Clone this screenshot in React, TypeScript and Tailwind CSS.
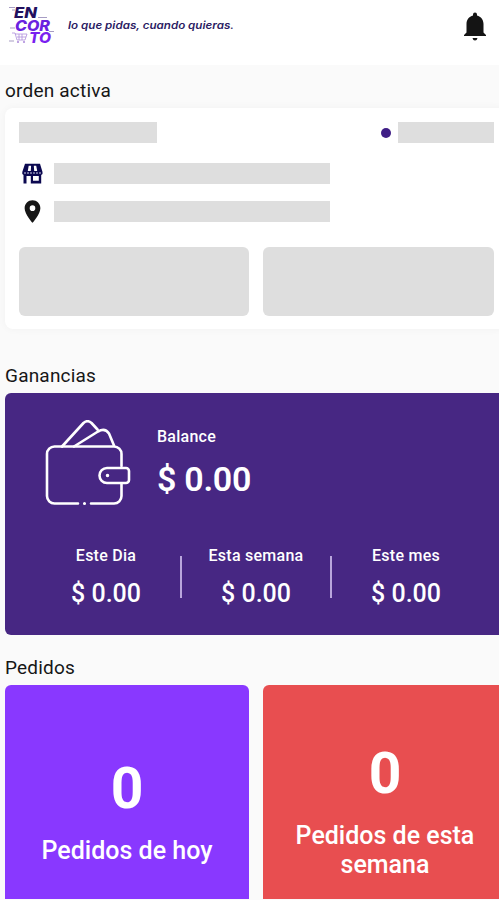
import React from 'react';
import { MdLocationOn } from 'react-icons/md';

const earnings = [
  { label: 'Este Dia', amount: '$ 0.00' },
  { label: 'Esta semana', amount: '$ 0.00' },
  { label: 'Este mes', amount: '$ 0.00' },
];

function Logo() {
  return (
    <svg width="52" height="44" viewBox="5 3 52 44" fontFamily="Inter, sans-serif" fontWeight="800" fontStyle="italic">
      <path d="M9 7.500h6M12 10h3M38 17.500h9M10 28h5M9 41h5M49 31.500h5" stroke="#6b5a9c" strokeWidth="0.6" />
      <text x="14" y="18" fontSize="14.500" textLength="23" lengthAdjust="spacingAndGlyphs" fill="#22105f">EN</text>
      <text x="15" y="30.500" fontSize="14.500" textLength="35" lengthAdjust="spacingAndGlyphs" fill="#6a22e0">COR</text>
      <text x="29" y="43" fontSize="14.500" textLength="22" lengthAdjust="spacingAndGlyphs" fill="#7a1ff0">TO</text>
      <path d="M12 33h3l2 7h8l2-6H15M17 37h9M19 34v6M22 34v6" stroke="#b08fdc" strokeWidth="0.8" fill="none" />
      <circle cx="18" cy="42" r="1.100" fill="#b08fdc" />
      <circle cx="24" cy="42" r="1.100" fill="#b08fdc" />
    </svg>
  );
}

function BellIcon() {
  return (
    <svg className="mt-2 mr-3 ml-auto" width="24" height="30" viewBox="0 0 24 30" fill="#141414">
      <path d="M12 1.500a2 2 0 0 1 2 2v.9c4 1 6.500 4.200 6.500 8.600v8.500l2.500 2.500v1H1v-1l2.500-2.500V13c0-4.400 2.500-7.600 6.500-8.600v-.9a2 2 0 0 1 2-2z" />
      <path d="M9.500 27h5q-.5 2.500-2.500 2.500T9.500 27z" />
    </svg>
  );
}

function StoreIcon() {
  return (
    <svg width="21" height="21" viewBox="0 0 21 21">
      <path fill="#0b0850" fillRule="evenodd" d="M3 .8h15L20.500 9v2l-1.300 1V20.500H8.800V13H4.500v7.500H1.500V12L.3 11V9zM6.700 2.800L5.800 8h3l.3-5.200zM11.800 2.800l.4 5.200h3l-1-5.200zM11 13v4.800h5.800V13z" />
      <path d="M2 10h17" stroke="#cfcfe8" strokeWidth="1" strokeDasharray="2 1" />
    </svg>
  );
}

function WalletIcon() {
  return (
    <svg width="86" height="86" viewBox="45 419 86 86" fill="none" stroke="#fff" strokeWidth="2.600" strokeLinecap="round" strokeLinejoin="round">
      <path d="M121.500 465v-12a7.500 7.500 0 0 0-7.500-7.500H54.500a7.500 7.500 0 0 0-7.500 7.500v42a7.500 7.500 0 0 0 7.500 7.500H78" />
      <path d="M91 502.500h23a7.500 7.500 0 0 0 7.500-7.500v-12" />
      <path d="M107 467h19a3 3 0 0 1 3 3v9a3 3 0 0 1-3 3h-19a7.500 7.500 0 0 1 0-15z" />
      <path d="M62 445.500L83.500 422q4-3.500 8 0l6 6.500M74 445.500l24-15q7-4 11 2l5 12" />
      <circle cx="107.500" cy="474.500" r="1" fill="#fff" strokeWidth="1.500" />
      <circle cx="84.500" cy="502.500" r="0.800" fill="#fff" strokeWidth="1.500" />
    </svg>
  );
}

export default function App() {
  return (
    <div className="h-[900px] w-full overflow-hidden bg-[#fafafa] font-[Roboto,sans-serif]">
      <header className="flex h-[65px] items-start bg-white pt-[3px] pl-[5px]">
        <Logo />
        <svg className="mt-3 ml-[11px]" width="168" height="22" viewBox="0 0 168 22">
          <text x="0" y="14" fontFamily="Inter, sans-serif" fontSize="10.500" fontWeight="600" fontStyle="italic" textLength="166" lengthAdjust="spacingAndGlyphs" fill="#2b1b63">
            lo que pidas, cuando quieras.
          </text>
        </svg>
        <BellIcon />
      </header>

      <main className="w-[512px] px-[5px]">
        <h2 className="h-[43px] pt-[15px] text-[19px] leading-[22px] tracking-[0.2px] text-[#161616]">orden activa</h2>
        <section className="h-[221px] rounded-lg bg-white px-[13.500px] pt-3.5 shadow-[0_0_8px_rgba(0,0,0,0.04)]">
          <div className="flex items-center">
            <div className="h-[21px] w-[138px] bg-[#dedede]" />
            <div className="mr-[7px] ml-auto size-[10px] rounded-full bg-[#3f1d86]" />
            <div className="h-[21px] w-[96px] bg-[#dedede]" />
          </div>
          <div className="mt-5 flex items-center">
            <div className="flex w-[35px] pl-[3.500px]"><StoreIcon /></div>
            <div className="h-[21px] w-[276px] bg-[#dedede]" />
          </div>
          <div className="mt-[17px] flex h-[21px] items-center">
            <div className="flex w-[35px]"><MdLocationOn className="size-[27px] text-[#161616]" /></div>
            <div className="h-[21px] w-[276px] bg-[#dedede]" />
          </div>
          <div className="mt-[25px] flex gap-3.5">
            <div className="h-[69px] w-[231px] rounded-md bg-[#dedede]" />
            <div className="h-[69px] w-[231px] rounded-md bg-[#dedede]" />
          </div>
        </section>

        <h2 className="h-16 pt-9 text-[19px] leading-[22px] tracking-[0.2px] text-[#161616]">Ganancias</h2>
        <section className="h-[242px] rounded-md bg-[#472783] pt-[27px] text-white">
          <div className="flex pl-10">
            <WalletIcon />
            <div className="ml-[26px] pt-[7px]">
              <p className="text-base leading-5 font-medium tracking-[0.25px]">Balance</p>
              <p className="mt-3 text-[34px] leading-10 font-semibold tracking-[-0.3px]">$ 0.00</p>
            </div>
          </div>
          <div className="mt-10 flex justify-center">
            {earnings.map((item, i) => (
              <React.Fragment key={item.label}>
                {i > 0 && <div className="mt-2.5 h-[42px] w-0.5 bg-[#b9a6dc]" />}
                <div className="w-[148px] text-center">
                  <p className="text-base leading-5 font-medium tracking-[0.25px]">{item.label}</p>
                  <p className="mt-[13px] text-[25px] leading-[30px] font-medium">{item.amount}</p>
                </div>
              </React.Fragment>
            ))}
          </div>
        </section>

        <h2 className="h-[50px] pt-[22px] text-[19px] leading-[22px] tracking-[0.2px] text-[#161616]">Pedidos</h2>
        <div className="flex gap-3.5 text-center text-[25px] leading-[29px] font-medium text-white">
          <div className="h-[214px] w-[244.500px] rounded-t-md bg-[#8938ff] pt-[71px]">
            <p className="text-[57px] leading-[66px] font-bold">0</p>
            <p className="mt-3.5">Pedidos de hoy</p>
          </div>
          <div className="h-[214px] w-[244.500px] rounded-t-md bg-[#e84e50] px-5 pt-14">
            <p className="text-[57px] leading-[66px] font-bold">0</p>
            <p className="mt-3.5">Pedidos de esta semana</p>
          </div>
        </div>
      </main>
    </div>
  );
}
